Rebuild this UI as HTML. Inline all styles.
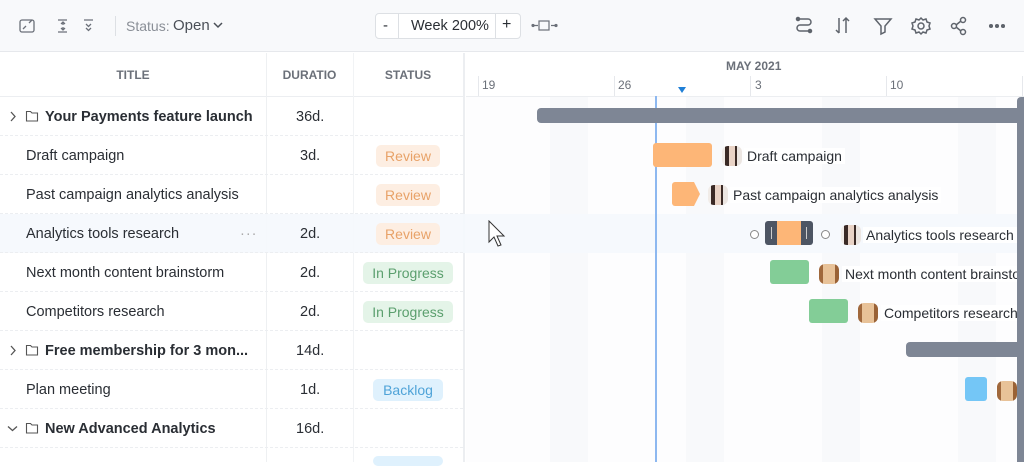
<!DOCTYPE html>
<html><head><meta charset="utf-8"><style>
*{box-sizing:border-box;margin:0;padding:0}
body{width:1024px;height:462px;overflow:hidden;background:#fff;font-family:"Liberation Sans","DejaVu Sans",sans-serif;color:#2a2e34;position:relative}
.a{position:absolute}
.tb{left:0;top:0;width:1024px;height:52px;background:#f8f9fb;border-bottom:1px solid #e6e8ec}
.hd{top:53px;height:44px;font-size:12px;font-weight:bold;color:#6b7079;display:flex;align-items:center;justify-content:center}
.row{left:0;width:463px;height:39px;border-bottom:1px dashed #eceef1;font-size:14.5px}
.cell{position:absolute;top:0;height:39px;display:flex;align-items:center}
.pill{padding:3px 0;border-radius:5px;font-size:14px;text-align:center}
.rev{background:#fdeee2;color:#e8a268;width:64px}
.prog{background:#e4f4e8;color:#5b9f6e;width:90px}
.back{background:#dff1fd;color:#4fa3d8;width:70px}
.av{width:20px;height:20px;border-radius:6px;background:linear-gradient(90deg,#f1ece8 0 15%,#3a2a26 15% 35%,#e9d3c6 35% 65%,#3a2a26 65% 75%,#ece6e2 75%)}
.av2{width:20px;height:20px;border-radius:6px;background:linear-gradient(90deg,#a0683c 0 20%,#e8c298 20% 80%,#9a6236 80%)}
.gl{font-size:14px;background:#fff;padding:0 3px}
</style></head><body>
<div class="a tb"></div>
<svg class="a" style="left:18px;top:17px" width="90" height="18" fill="none" stroke="#6b7079" stroke-width="1.3">
<rect x="2" y="3" width="14" height="12" rx="2"/><path d="M5 12l3-3M11 6l3-3"/>
<path d="M49 3h-9M49 15h-9M45 5v3M43 7l2-2 2 2M45 13v-3M43 11l2 2 2-2"/>
<path d="M75 3h-9M68 7l2.5 2.5L73 7M68 11l2.5 2.5L73 11"/>
</svg>
<div class="a" style="left:115px;top:16px;width:1px;height:20px;background:#dde0e4"></div>
<div class="a" style="left:126px;top:18px;font-size:14px;color:#8a8f97">Status:</div>
<div class="a" style="left:173px;top:17px;font-size:15px;color:#4a4f57">Open</div>
<svg class="a" style="left:212px;top:20px" width="12" height="10" fill="none" stroke="#4a4f57" stroke-width="1.5"><path d="M2 3l4 4 4-4"/></svg>
<div class="a" style="left:375px;top:13px;width:146px;height:26px;border:1px solid #dde0e4;border-radius:4px;background:#fff"></div>
<div class="a" style="left:398px;top:13px;width:1px;height:26px;background:#dde0e4"></div>
<div class="a" style="left:495px;top:13px;width:1px;height:26px;background:#dde0e4"></div>
<div class="a" style="left:383px;top:17px;font-size:15px">-</div>
<div class="a" style="left:411px;top:18px;font-size:14.5px">Week 200%</div>
<div class="a" style="left:502px;top:16px;font-size:16px">+</div>
<svg class="a" style="left:530px;top:19px" width="30" height="14" fill="none" stroke="#6b7079" stroke-width="1.2"><rect x="9" y="2" width="10" height="9"/><path d="M2 6.5h6M21 6.5h6"/><circle cx="3" cy="6.5" r="1" fill="#6b7079"/><circle cx="26" cy="6.5" r="1" fill="#6b7079"/></svg>
<svg class="a" style="left:795px;top:15px" width="210" height="22" fill="none" stroke="#5f646c" stroke-width="1.5">
<path d="M3 4h10a3 3 0 0 1 0 6H5a3 3 0 0 0 0 6h10"/><circle cx="3" cy="4" r="1.5" fill="#5f646c"/><circle cx="15" cy="16" r="1.5" fill="#5f646c"/>
<path d="M44 3v15M41 15l3 3M51 18V3M48 6l3-3 3 3"/>
<path d="M80 4h16l-6 7v6l-4 2v-8z"/>
<circle cx="126" cy="11" r="3"/><path d="M126 3l2 2 3-1 1 3 3 1-1 3 1 3-3 1-1 3-3-1-2 2-2-2-3 1-1-3-3-1 1-3-1-3 3-1 1-3 3 1z"/>
<circle cx="159" cy="11" r="2.5"/><circle cx="168" cy="5" r="2.5"/><circle cx="168" cy="17" r="2.5"/><path d="M161 10l5-4M161 12l5 4"/>
<circle cx="196" cy="11" r="1.3" fill="#5f646c"/><circle cx="202" cy="11" r="1.3" fill="#5f646c"/><circle cx="208" cy="11" r="1.3" fill="#5f646c"/>
</svg>
<div class="a hd" style="left:0;width:266px">TITLE</div>
<div class="a hd" style="left:266px;width:87px">DURATIO</div>
<div class="a hd" style="left:353px;width:110px">STATUS</div>
<div class="a" style="left:0;top:96px;width:463px;height:1px;background:#eceef1"></div>
<div class="a" style="left:266px;top:53px;width:1px;height:409px;background:#eef0f2"></div>
<div class="a" style="left:353px;top:53px;width:1px;height:409px;background:#f1f3f5"></div>
<div class="a" style="left:463px;top:53px;width:2px;height:409px;background:#eceef1"></div>
<div class="a" style="left:466px;top:97px;width:558px;height:365px;background:#fdfdfe"></div>
<div class="a" style="left:550px;top:97px;width:38px;height:365px;background:#f8f9fb"></div>
<div class="a" style="left:686px;top:97px;width:38px;height:365px;background:#f8f9fb"></div>
<div class="a" style="left:822px;top:97px;width:38px;height:365px;background:#f8f9fb"></div>
<div class="a" style="left:958px;top:97px;width:38px;height:365px;background:#f8f9fb"></div>
<div class="a" style="left:0;top:214px;width:1024px;height:39px;background:#f5f8fd;opacity:.9"></div>
<div class="a" style="left:466px;top:96px;width:558px;height:1px;background:#eceef1"></div>
<div class="a" style="left:726px;top:59px;font-size:12px;font-weight:bold;color:#6b7079">MAY 2021</div>
<div class="a" style="left:478px;top:76px;width:1px;height:20px;background:#e6e8ec"></div>
<div class="a" style="left:614px;top:76px;width:1px;height:20px;background:#e6e8ec"></div>
<div class="a" style="left:750px;top:76px;width:1px;height:20px;background:#e6e8ec"></div>
<div class="a" style="left:886px;top:76px;width:1px;height:20px;background:#e6e8ec"></div>
<div class="a" style="left:1022px;top:76px;width:1px;height:20px;background:#e6e8ec"></div>
<div class="a" style="left:482px;top:78px;font-size:12px;color:#6b7079">19</div>
<div class="a" style="left:618px;top:78px;font-size:12px;color:#6b7079">26</div>
<div class="a" style="left:755px;top:78px;font-size:12px;color:#6b7079">3</div>
<div class="a" style="left:890px;top:78px;font-size:12px;color:#6b7079">10</div>
<div class="a" style="left:678px;top:87px;width:0;height:0;border-left:4px solid transparent;border-right:4px solid transparent;border-top:6px solid #1f7fd6"></div>
<div class="a" style="left:655px;top:96px;width:1.5px;height:366px;background:#8db8f0"></div>
<div class="a" style="left:537px;top:108px;width:487px;height:15px;background:#7e8695;border-radius:4px 0 0 4px"></div>
<div class="a" style="left:1017px;top:97px;width:7px;height:365px;background:#7e8695;border-radius:4px 0 0 0"></div>
<div class="a" style="left:906px;top:342px;width:111px;height:15px;background:#7e8695;border-radius:4px 0 0 4px"></div>
<div class="a" style="left:653px;top:143px;width:59px;height:24px;background:#fdb677;border-radius:3px"></div>
<div class="a av" style="left:722px;top:146px"></div><div class="a gl" style="left:744px;top:148px">Draft campaign</div>
<svg class="a" style="left:672px;top:182px" width="30" height="24"><path d="M3 0h19l6 12-6 12H3a3 3 0 0 1-3-3V3a3 3 0 0 1 3-3z" fill="#fdb677"/></svg>
<div class="a av" style="left:708px;top:185px"></div><div class="a gl" style="left:730px;top:187px">Past campaign analytics analysis</div>
<div class="a" style="left:750px;top:230px;width:9px;height:9px;border:1px solid #888;border-radius:50%;background:#fff"></div>
<div class="a" style="left:765px;top:221px;width:48px;height:24px;background:#4d5563;border-radius:3px"></div>
<div class="a" style="left:777px;top:221px;width:24px;height:24px;background:#fdb677"></div>
<div class="a" style="left:771px;top:227px;width:1px;height:12px;background:#ccc"></div>
<div class="a" style="left:806px;top:227px;width:1px;height:12px;background:#ccc"></div>
<div class="a" style="left:821px;top:230px;width:9px;height:9px;border:1px solid #888;border-radius:50%;background:#fff"></div>
<div class="a av" style="left:841px;top:225px"></div><div class="a gl" style="left:863px;top:227px">Analytics tools research</div>
<div class="a" style="left:770px;top:260px;width:39px;height:24px;background:#83cd97;border-radius:3px"></div>
<div class="a av2" style="left:819px;top:264px"></div><div class="a gl" style="left:842px;top:266px;width:175px;overflow:hidden;white-space:nowrap">Next month content brainstorm</div>
<div class="a" style="left:809px;top:299px;width:39px;height:24px;background:#83cd97;border-radius:3px"></div>
<div class="a av2" style="left:858px;top:303px"></div><div class="a gl" style="left:881px;top:305px;width:136px;overflow:hidden;white-space:nowrap">Competitors research</div>
<div class="a" style="left:965px;top:377px;width:22px;height:24px;background:#74c6f6;border-radius:3px"></div>
<div class="a av2" style="left:997px;top:381px"></div>
<svg class="a" style="left:488px;top:220px" width="20" height="28"><path d="M1 1v21l5-5 4 9 3-1-4-9h7z" fill="#fff" stroke="#333" stroke-width="1"/></svg>
<div class="a row" style="top:97px"><svg class="cell" style="left:8px" width="10" height="39"><path d="M3 15l4 4.5-4 4.5" stroke="#555" fill="none" stroke-width="1.3"/></svg><svg class="cell" style="left:25px" width="14" height="39"><path d="M1.5 14.5h4l1.5 1.5h5.5v8h-11z" stroke="#555" fill="none" stroke-width="1.1"/></svg><div class="cell" style="left:45px;font-weight:bold">Your Payments feature launch</div><div class="cell" style="left:296px">36d.</div></div>
<div class="a row" style="top:136px"><div class="cell" style="left:26px">Draft campaign</div><div class="cell" style="left:300px">3d.</div><div class="cell" style="left:376px"><div class="pill rev">Review</div></div></div>
<div class="a row" style="top:175px"><div class="cell" style="left:26px">Past campaign analytics analysis</div><div class="cell" style="left:376px"><div class="pill rev">Review</div></div></div>
<div class="a row" style="top:214px"><div class="cell" style="left:26px">Analytics tools research</div><div class="cell" style="left:240px;color:#aaa;letter-spacing:1px">···</div><div class="cell" style="left:300px">2d.</div><div class="cell" style="left:376px"><div class="pill rev">Review</div></div></div>
<div class="a row" style="top:253px"><div class="cell" style="left:26px">Next month content brainstorm</div><div class="cell" style="left:300px">2d.</div><div class="cell" style="left:363px"><div class="pill prog">In Progress</div></div></div>
<div class="a row" style="top:292px"><div class="cell" style="left:26px">Competitors research</div><div class="cell" style="left:300px">2d.</div><div class="cell" style="left:363px"><div class="pill prog">In Progress</div></div></div>
<div class="a row" style="top:331px"><svg class="cell" style="left:8px" width="10" height="39"><path d="M3 15l4 4.5-4 4.5" stroke="#555" fill="none" stroke-width="1.3"/></svg><svg class="cell" style="left:25px" width="14" height="39"><path d="M1.5 14.5h4l1.5 1.5h5.5v8h-11z" stroke="#555" fill="none" stroke-width="1.1"/></svg><div class="cell" style="left:45px;font-weight:bold">Free membership for 3 mon...</div><div class="cell" style="left:296px">14d.</div></div>
<div class="a row" style="top:370px"><div class="cell" style="left:26px">Plan meeting</div><div class="cell" style="left:300px">1d.</div><div class="cell" style="left:373px"><div class="pill back">Backlog</div></div></div>
<div class="a row" style="top:409px"><svg class="cell" style="left:6px" width="12" height="39"><path d="M2 17.5l4.5 4 4.5-4" stroke="#555" fill="none" stroke-width="1.3"/></svg><svg class="cell" style="left:25px" width="14" height="39"><path d="M1.5 14.5h4l1.5 1.5h5.5v8h-11z" stroke="#555" fill="none" stroke-width="1.1"/></svg><div class="cell" style="left:45px;font-weight:bold">New Advanced Analytics</div><div class="cell" style="left:296px">16d.</div></div>
<div class="a" style="left:373px;top:456px;width:70px;height:10px;background:#dff1fd;border-radius:5px"></div>
</body></html>
